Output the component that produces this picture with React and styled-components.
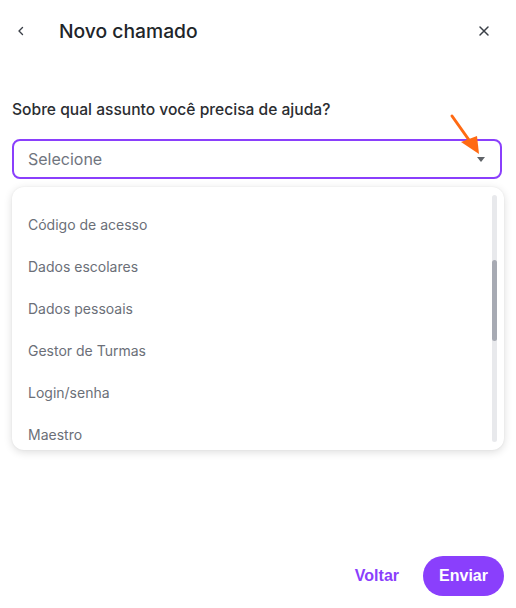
import React from "react";
import styled, { createGlobalStyle } from "styled-components";

const Global = createGlobalStyle`
  html, body { margin: 0; padding: 0; background: #fff; }
  body { font-family: Inter, "Noto Sans", sans-serif; }
  * { box-sizing: border-box; }
`;

const Page = styled.div`
  position: relative;
  width: 516px;
  height: 608px;
  display: flex;
  flex-direction: column;
  padding: 0 12px 12px 12px;
`;

const Header = styled.header`
  height: 62px;
  display: flex;
  align-items: center;
  margin: 0 -12px;
  padding: 0 20px 0 9px;
`;

const IconButton = styled.button`
  width: 24px;
  height: 24px;
  border: 0;
  background: transparent;
  display: flex;
  align-items: center;
  justify-content: center;
  padding: 0;
  color: #3a3f47;
`;

const Title = styled.h1`
  flex: 1;
  margin: 0 0 0 26px;
  font-size: 19.3px;
  font-weight: 500;
  color: #212529;
`;

const Label = styled.div`
  margin-top: 38px;
  font-size: 15.6px;
  font-weight: 500;
  color: #2b2d31;
  line-height: 20px;
`;

const Select = styled.div`
  position: relative;
  margin-top: 19px;
  height: 40px;
  width: 490px;
  border: 2px solid #8a3ffc;
  border-radius: 8px;
  display: flex;
  align-items: center;
  padding: 0 14px;
  font-size: 16px;
  color: #70757e;
`;

const Caret = styled.span`
  margin-left: auto;
  width: 0;
  height: 0;
  border-left: 4.5px solid transparent;
  border-right: 4.5px solid transparent;
  border-top: 5px solid #5f6368;
  margin-right: 1px;
`;

const Menu = styled.div`
  position: relative;
  margin-top: 8px;
  width: 492px;
  height: 263px;
  border-radius: 12px;
  background: #fff;
  box-shadow: 0 2px 8px rgba(0, 0, 0, 0.14), 0 0 2px rgba(0, 0, 0, 0.06);
  overflow: hidden;
  display: flex;
  flex-direction: column;
  padding-top: 16px;
`;

const Item = styled.div`
  height: 42px;
  flex-shrink: 0;
  display: flex;
  align-items: center;
  padding-left: 16px;
  font-size: 14px;
  color: #6b6f78;
`;

const Track = styled.div`
  position: absolute;
  right: 7px;
  top: 8px;
  width: 5px;
  height: 247px;
  border-radius: 3px;
  background: #e8e9ec;
`;

const Thumb = styled.div`
  position: absolute;
  left: 0;
  top: 65px;
  width: 5px;
  height: 81px;
  border-radius: 3px;
  background: #a7aab3;
`;

const Footer = styled.footer`
  margin-top: auto;
  display: flex;
  justify-content: flex-end;
  align-items: center;
  gap: 24px;
`;

const TextButton = styled.button`
  border: 0;
  background: transparent;
  color: #8a3ffc;
  font: bold 16px "Liberation Sans", Arial, sans-serif;
  padding: 0;
`;

const PillButton = styled.button`
  border: 0;
  height: 40px;
  width: 81px;
  border-radius: 20px;
  background: #8a3ffc;
  color: #fff;
  font: bold 16px "Liberation Sans", Arial, sans-serif;
  padding: 0;
`;

const Annotation = styled.svg`
  position: absolute;
  left: 448px;
  top: 112px;
  overflow: visible;
`;

const items = [
  "Código de acesso",
  "Dados escolares",
  "Dados pessoais",
  "Gestor de Turmas",
  "Login/senha",
  "Maestro",
];

export default function App() {
  return (
    <>
      <Global />
      <Page>
        <Header>
          <IconButton aria-label="Voltar">
            <svg width="12" height="12" viewBox="0 0 12 12" fill="none">
              <path d="M7.5 2.5L4 6l3.5 3.5" stroke="#3a3f47" strokeWidth="1.4" strokeLinecap="round" strokeLinejoin="round" />
            </svg>
          </IconButton>
          <Title>Novo chamado</Title>
          <IconButton aria-label="Fechar">
            <svg width="12" height="12" viewBox="0 0 12 12" fill="none">
              <path d="M2 2l8 8M10 2l-8 8" stroke="#3a3f47" strokeWidth="1.5" strokeLinecap="round" />
            </svg>
          </IconButton>
        </Header>
        <Label>Sobre qual assunto você precisa de ajuda?</Label>
        <Select>
          Selecione
          <Caret />
        </Select>
        <Menu>
          {items.map((t) => (
            <Item key={t}>{t}</Item>
          ))}
          <Track>
            <Thumb />
          </Track>
        </Menu>
        <Footer>
          <TextButton>Voltar</TextButton>
          <PillButton>Enviar</PillButton>
        </Footer>
        <Annotation width="40" height="44" viewBox="0 0 40 44">
          <path d="M4 4L21 28" stroke="#ff6a13" strokeWidth="3" strokeLinecap="round" />
          <path d="M13 30L29 24L31 42Z" fill="#ff6a13" />
        </Annotation>
      </Page>
    </>
  );
}
